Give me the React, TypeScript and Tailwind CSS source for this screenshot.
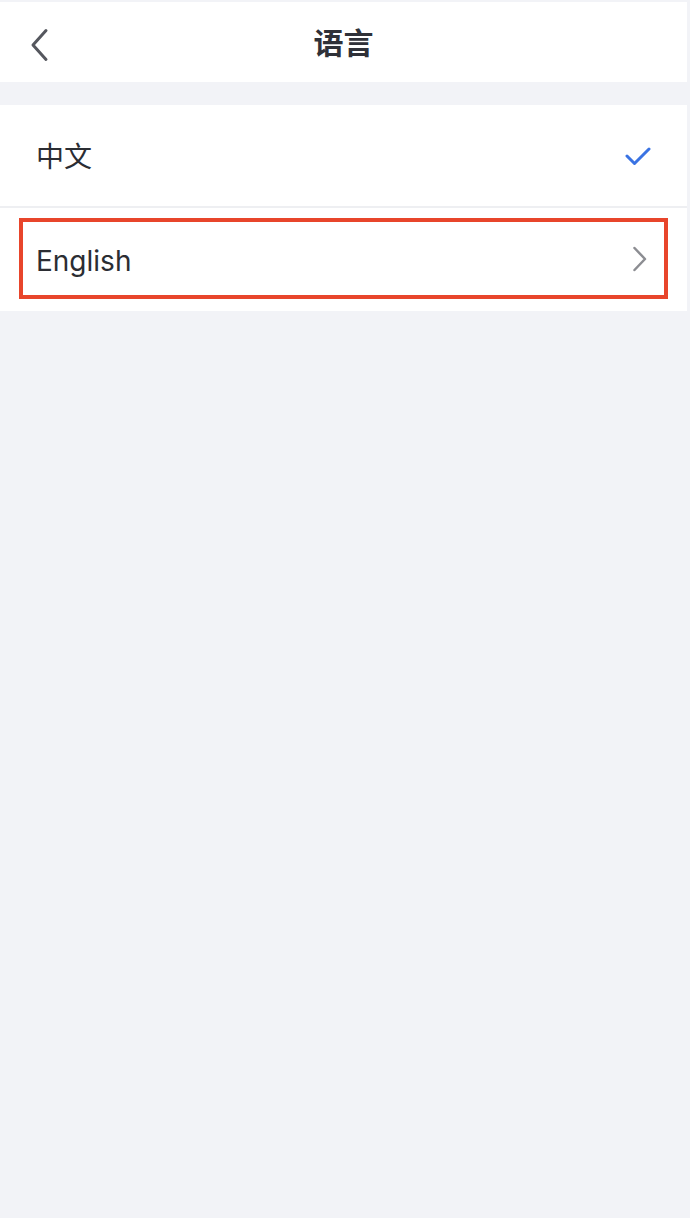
import { useState } from 'react'

const font = { fontFamily: 'Inter, "Noto Sans CJK SC", sans-serif' }

export default function App() {
  const [lang] = useState('zh')

  return (
    <div className="min-h-screen bg-[#f2f3f7] pt-[2px] pr-[3px]" style={font}>
      {/* header */}
      <header className="relative flex h-[80px] items-center justify-center bg-white">
        <button className="absolute left-[26px] top-[26px] flex h-[34px] w-[26px] items-center justify-center">
          <svg width="22" height="34" viewBox="0 0 22 34" fill="none">
            <path d="M18 2.5 L5 17 L18 31.5" stroke="#55575e" strokeWidth="3" strokeLinecap="round" strokeLinejoin="round" />
          </svg>
        </button>
        <h1 className="pt-[2px] text-[30px] font-bold text-[#2f3138]">语言</h1>
      </header>

      <div className="mt-[23px] bg-white">
        <div className="flex h-[103px] items-center justify-between border-b-2 border-[#eeeff2] pl-[36px] pr-[36px]">
          <span className="pt-[3px] text-[28px] text-[#2b2d33]">中文</span>
          {lang === 'zh' && (
            <svg width="26" height="20" viewBox="0 0 26 20" fill="none">
              <path d="M2 10 L9.5 17.5 L24 3" stroke="#3a73e3" strokeWidth="3" strokeLinecap="round" strokeLinejoin="round" />
            </svg>
          )}
        </div>
        <div className="px-[19px] pt-[10px] pb-[12px]">
          <div className="flex h-[81px] items-center justify-between border-4 border-[#e8452b] pl-[13px] pr-[16px]">
            <span className="pt-[4px] text-[28px] text-[#2b2d33]">English</span>
            <svg width="16" height="26" viewBox="0 0 16 26" fill="none">
              <path d="M2.5 2 L13 13 L2.5 24" stroke="#8c8d92" strokeWidth="2.5" strokeLinecap="round" strokeLinejoin="round" />
            </svg>
          </div>
        </div>
      </div>
    </div>
  )
}
